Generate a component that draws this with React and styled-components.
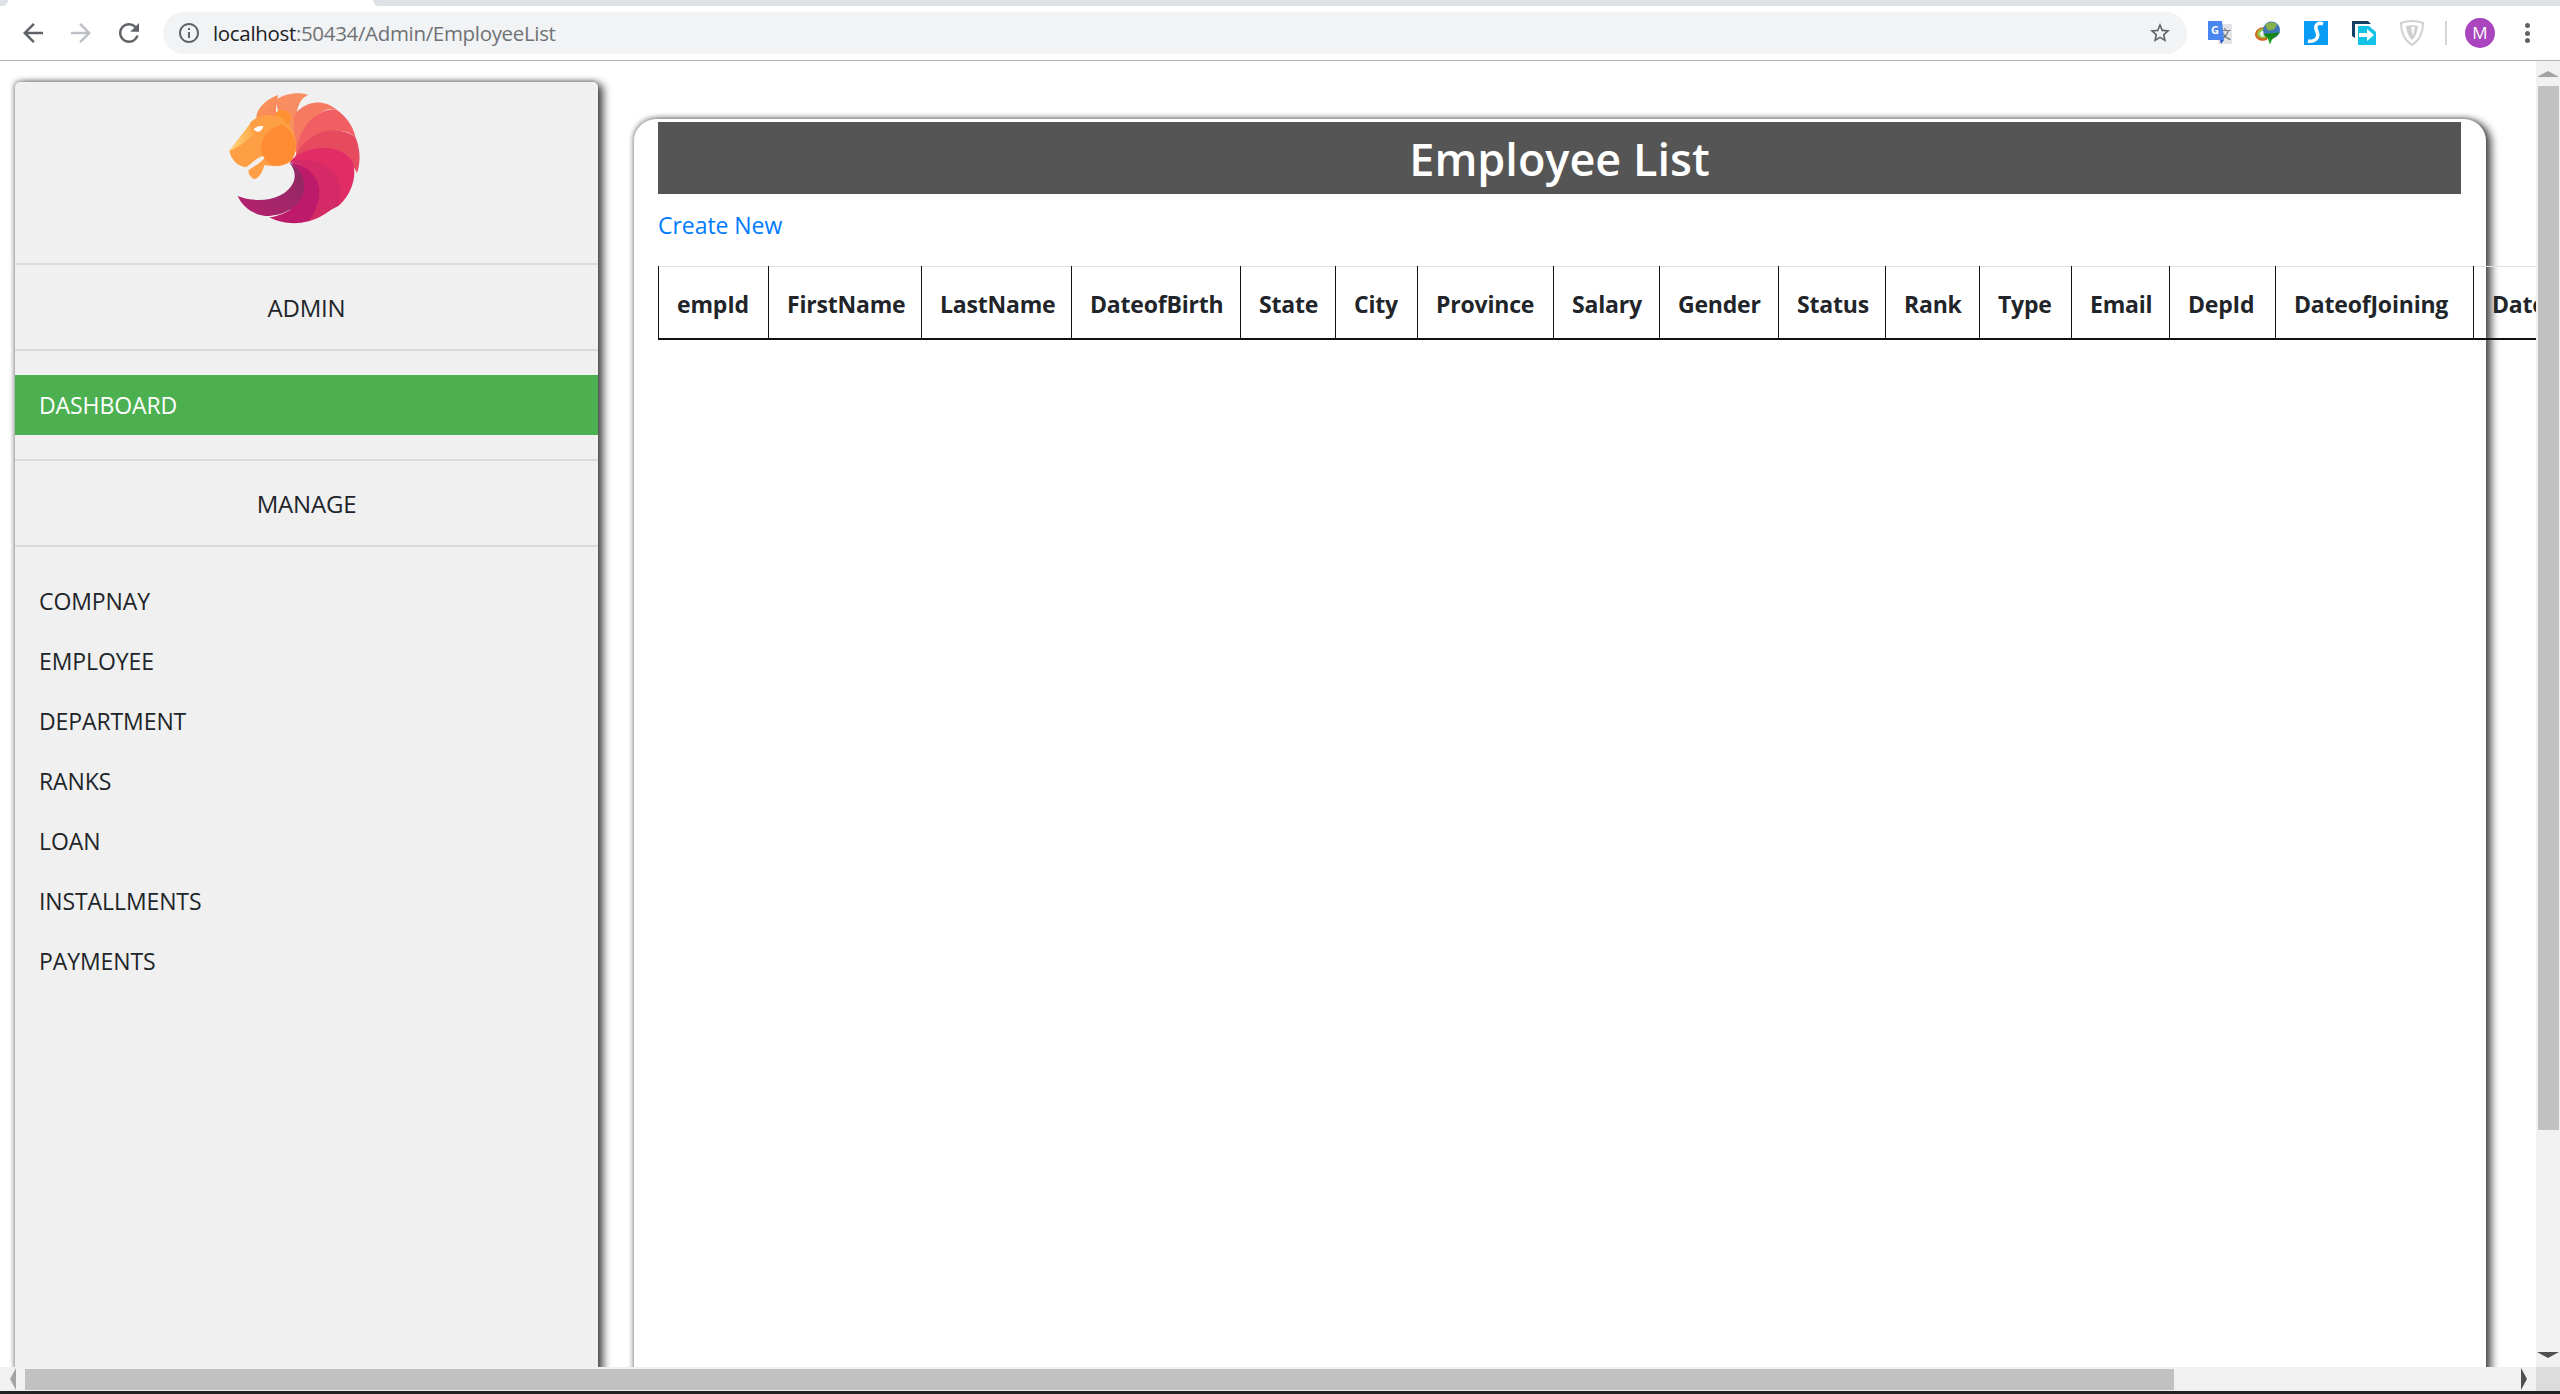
import React from "react";
import styled, { createGlobalStyle } from "styled-components";

const GlobalStyle = createGlobalStyle`
  html, body {
    margin: 0;
    padding: 0;
    width: 2560px;
    height: 1394px;
    overflow: hidden;
    background: #fff;
    font-family: "Open Sans", "Liberation Sans", sans-serif;
    color: #212529;
  }
  * { box-sizing: border-box; }
`;

const Page = styled.div`
  width: 2560px;
  height: 1394px;
  display: flex;
  flex-direction: column;
  overflow: hidden;
`;

/* browser chrome */
const TabStrip = styled.div`
  height: 6px;
  display: flex;
  background: #fff;
`;

const TabCorner = styled.div`
  width: 8px;
  background: #dee1e6;
  border-bottom-right-radius: 6px;
`;

const ActiveTab = styled.div`
  width: 365px;
`;

const TabRest = styled.div`
  flex: 1;
  background: #dee1e6;
  border-bottom-left-radius: 6px;
`;

const Toolbar = styled.div`
  height: 56px;
  display: flex;
  align-items: center;
  padding-left: 9px;
  background: #fff;
  border-bottom: 1px solid #b5b5b5;
`;

const ToolButton = styled.div`
  width: 48px;
  height: 48px;
  display: flex;
  align-items: center;
  justify-content: center;
  flex-shrink: 0;
`;

const AddressBar = styled.div`
  width: 2024px;
  height: 42px;
  margin-left: 10px;
  margin-right: 9px;
  padding: 0 15px 0 14px;
  display: flex;
  align-items: center;
  background: #f1f3f4;
  border-radius: 21px;
`;

const Url = styled.div`
  margin-left: 12px;
  flex: 1;
  font-size: 20.5px;
  letter-spacing: -0.33px;
  color: #6f7276;
`;

const UrlHost = styled.span`
  color: #202124;
`;

const ToolDivider = styled.div`
  width: 2px;
  height: 24px;
  margin-left: 9px;
  background: #d3d4d6;
`;

const Avatar = styled.div`
  width: 30px;
  height: 30px;
  margin-left: 18px;
  border-radius: 50%;
  background: #a845bf;
  color: #fff;
  font-size: 17px;
  line-height: 30px;
  text-align: center;
`;

const MenuDots = styled.div`
  width: 5px;
  height: 20px;
  margin-left: 30px;
  display: flex;
  flex-direction: column;
  justify-content: space-between;
`;

const MenuDot = styled.span`
  width: 5px;
  height: 5px;
  border-radius: 50%;
  background: #5f6368;
`;

/* page area + scrollbars */
const Viewport = styled.div`
  height: 1306px;
  display: flex;
`;

const Main = styled.main`
  width: 2536px;
  height: 100%;
  display: flex;
  align-items: flex-start;
  overflow: hidden;
`;

const Sidebar = styled.aside`
  width: 583px;
  height: 1400px;
  flex-shrink: 0;
  margin: 21px 0 0 15px;
  background: #f0f0f0;
  border-radius: 5px 5px 0 0;
  box-shadow: 5px 2px 8px #444, -1px -1px 5px #999;
`;

const LogoBox = styled.div`
  height: 183px;
  display: flex;
  justify-content: center;
  border-bottom: 2px solid #dcdcdc;
`;

const SectionTitle = styled.div`
  height: 86px;
  padding-top: 1px;
  display: flex;
  align-items: center;
  justify-content: center;
  font-size: 24px;
  letter-spacing: -0.2px;
  font-weight: 400;
  color: #212529;
  border-bottom: 2px solid #dcdcdc;
`;

const NavList = styled.nav`
  padding: ${(props) => props.padding};
  border-bottom: ${(props) => (props.divided ? "2px solid #dcdcdc" : "none")};
`;

const NavItem = styled.a`
  height: 60px;
  display: flex;
  align-items: center;
  padding-left: 24px;
  font-size: 23px;
  letter-spacing: -0.1px;
  font-weight: 400;
  color: ${(props) => (props.active ? "#fff" : "#212529")};
  background: ${(props) => (props.active ? "#4caf50" : "transparent")};
`;

const Card = styled.section`
  width: 1852px;
  height: 1400px;
  flex-shrink: 0;
  margin: 58px 0 0 36px;
  padding: 3px 25px 0 24px;
  background: #fff;
  border-radius: 22px 22px 0 0;
  box-shadow: 5px 2px 8px #444, -1px -1px 5px #999;
`;

const Heading = styled.h1`
  margin: 0;
  height: 72px;
  padding-top: 1px;
  display: flex;
  align-items: center;
  justify-content: center;
  background: #555;
  color: #fff;
  font-size: 45px;
  font-weight: 600;
`;

const CreateLink = styled.a`
  display: block;
  margin: 13px 0 23px;
  line-height: 36px;
  font-size: 23px;
  letter-spacing: -0.05px;
  color: #007bff;
`;

const Table = styled.table`
  width: 2015px;
  table-layout: fixed;
  border-collapse: collapse;
  border-top: 1px solid #dee2e6;
  border-bottom: 2px solid #111;
`;

const HeadCell = styled.th`
  width: ${(props) => props.width}px;
  height: 72px;
  padding: 2px 0 0 18px;
  text-align: left;
  white-space: nowrap;
  overflow: hidden;
  border-left: 1px solid #111;
  font-size: 23px;
  letter-spacing: -0.2px;
  font-weight: 700;
  color: #212529;
`;

const VerticalBar = styled.div`
  width: 24px;
  height: 100%;
  display: flex;
  flex-direction: column;
  background: #f1f1f1;
`;

const BarButton = styled.div`
  width: ${(props) => (props.horizontal ? "25px" : "100%")};
  height: ${(props) => (props.horizontal ? "100%" : "25px")};
  display: flex;
  align-items: center;
  justify-content: center;
  flex-shrink: 0;
`;

const VerticalThumb = styled.div`
  height: 1044px;
  margin: 0 1px 0 2px;
  background: #c1c1c1;
`;

const BarSpacer = styled.div`
  flex: 1;
`;

const HorizontalBar = styled.div`
  height: 24px;
  display: flex;
  background: #f1f1f1;
`;

const HorizontalThumb = styled.div`
  width: 2149px;
  height: 21px;
  margin-top: 2px;
  background: #c1c1c1;
`;

const BarCorner = styled.div`
  width: 24px;
  background: #dcdcdc;
`;

const BottomEdge = styled.div`
  height: 3px;
  background: #222;
`;

const Arrow = styled.span`
  width: 0;
  height: 0;
  border-style: solid;
  border-color: transparent;
  ${(props) =>
    props.dir === "up" &&
    `border-width: 0 11px 6px; border-bottom-color: ${props.color};`}
  ${(props) =>
    props.dir === "down" &&
    `border-width: 6px 11px 0; border-top-color: ${props.color};`}
  ${(props) =>
    props.dir === "left" &&
    `border-width: 11px 6px 11px 0; border-right-color: ${props.color};`}
  ${(props) =>
    props.dir === "right" &&
    `border-width: 11px 0 11px 6px; border-left-color: ${props.color};`}
`;

const Icon = ({ d, color = "#5f6368", size = 30 }) => (
  <svg width={size} height={size} viewBox="0 0 24 24" fill={color}>
    <path d={d} />
  </svg>
);

const TranslateIcon = () => (
  <svg width="26" height="26" viewBox="0 0 26 26">
    <rect x="11" y="4" width="14" height="20" fill="#e4e4e4" />
    <text x="18" y="19" fontSize="12" fill="#5f6368" textAnchor="middle" fontFamily="Noto Sans CJK SC, sans-serif">文</text>
    <path d="M1 1h14l2 19H1z" fill="#4a86f0" />
    <path d="M13 20h4l-3 4z" fill="#2a56c6" />
    <text x="8" y="14" fontSize="11" fontWeight="700" fill="#fff" textAnchor="middle" fontFamily="Open Sans, sans-serif">G</text>
  </svg>
);

const IdmIcon = () => (
  <svg width="26" height="26" viewBox="0 0 26 26">
    <path d="M0 15a8 8 0 0 1 13-6l-1 11C7 22 1 20 0 15z" fill="#d9601c" />
    <path d="M2 15a6 6 0 0 1 10-5l-1 8c-4 1-8 0-9-3z" fill="#8dc63f" />
    <path d="M5 15a3 3 0 0 1 6-2l-1 3c-2 1-4 1-5-1z" fill="#eee" />
    <circle cx="16.500" cy="10" r="8.500" fill="#3f77b8" />
    <path d="M10 5c3-3 9-4 12-.500l-3 5-6 1z" fill="#86b04a" />
    <path d="M8 14l17-1.500-8 7-2 5-2-5.500z" fill="#1f9d1f" />
    <path d="M8 14l17-1.500-8 7z" fill="#0c6e0c" opacity="0.500" />
  </svg>
);

const StackIcon = () => (
  <svg width="26" height="26" viewBox="0 0 26 26">
    <rect x="1" y="1" width="24" height="24" fill="#0a9cf5" />
    <path d="M20 4c-5-2-8 1-7 5 1 3 3 5 1 9-1 2-5 4-9 3" stroke="#fff" strokeWidth="3.500" fill="none" />
  </svg>
);

const ForwardIcon = () => (
  <svg width="26" height="26" viewBox="0 0 26 26">
    <path d="M1 1h16l3 3H4v14l-3-2z" fill="#123f63" />
    <path d="M7 6h11l7 6v13H7z" fill="#14c2e6" />
    <path d="M8 13h8V9l7 6-7 6v-4H8z" fill="#fff" />
  </svg>
);

const ShieldIcon = () => (
  <svg width="24" height="26" viewBox="0 0 24 26">
    <path d="M1 3c7-2.500 15-2.500 22 0 0 9-3 17-11 22C4 20 1 12 1 3z" fill="#fff" stroke="#cfcfcf" strokeWidth="2" />
    <path d="M6 6c4-1 8-1 12 0-.500 6-2.500 11-6 14-3.500-3-5.500-8-6-14z" fill="#cfcfcf" />
    <path d="M11 7h4l-2 9z" fill="#fff" />
  </svg>
);

const LionLogo = () => (
  <svg width="200" height="160" viewBox="18 6 600 480">
    <defs>
      <linearGradient id="tail" x1="0" y1="1" x2="1" y2="0">
        <stop offset="0" stopColor="#b8206f" />
        <stop offset="1" stopColor="#8a2a62" />
      </linearGradient>
      <linearGradient id="mane" x1="0" y1="0" x2="1" y2="1">
        <stop offset="0" stopColor="#ff9c53" />
        <stop offset="1" stopColor="#f57f63" />
      </linearGradient>
      <linearGradient id="muzzle" x1="0" y1="0" x2="1" y2="0">
        <stop offset="0" stopColor="#ffd878" />
        <stop offset="1" stopColor="#ffa347" />
      </linearGradient>
    </defs>
    <path d="M300 262L460 280L412 378L322 424L262 415Z" fill="#cf2669" />
    <path d="M165 112C170 80 200 55 232 45C222 70 222 100 235 130Z" fill="url(#mane)" />
    <path d="M222 62C250 40 295 35 322 45C285 60 280 110 285 215L240 120Z" fill="#f88e62" />
    <path d="M278 110C300 70 360 50 405 88C365 80 320 110 285 220Z" fill="#f67a62" />
    <path d="M285 225C290 150 340 85 405 88C435 110 455 135 463 170C420 135 350 150 285 225Z" fill="#f25f62" />
    <path d="M280 235C310 165 390 125 463 170C478 205 480 245 468 280C450 225 350 185 280 235Z" fill="#e64a5f" />
    <path d="M265 245C320 190 420 190 455 245C470 290 450 345 412 378C425 320 380 225 265 245Z" fill="#e22c66" />
    <path d="M265 245C340 225 420 265 416 330C430 360 380 410 322 424C355 385 365 330 340 295C320 265 295 250 265 245Z" fill="#d42a66" />
    <path d="M265 245C320 255 355 290 355 335C355 375 335 405 322 424C280 436 235 428 205 412C255 405 305 375 310 320C312 290 290 262 265 245Z" fill="#bd1a6b" />
    <path d="M110 348C170 372 255 360 278 305C285 285 280 265 265 248C295 260 312 295 310 325C305 375 255 405 205 408C160 408 125 382 110 348Z" fill="url(#tail)" />
    <path d="M85 213L145 135C150 115 190 100 222 107C225 88 255 82 268 105C272 125 262 130 268 140C290 170 290 220 270 243C250 262 215 260 190 255C185 280 170 297 160 297C150 295 140 280 143 270C165 255 185 245 192 230C175 225 160 245 135 262C105 258 90 235 85 213Z" fill="#ff9f45" />
    <path d="M85 213L145 135C150 150 155 155 165 160C140 180 110 205 85 213Z" fill="url(#muzzle)" />
    <path d="M180 205C182 165 215 135 245 135C275 150 290 185 283 215C275 245 245 260 215 255C195 245 180 225 180 205Z" fill="#ff8c32" />
    <path d="M222 107C225 88 255 82 268 105C272 125 262 130 258 135C250 115 235 105 222 107Z" fill="#ff9130" />
    <path d="M158 148C165 140 178 136 187 139C185 148 178 156 170 155C165 155 160 152 158 148Z" fill="#fff" />
  </svg>
);

const columns = [
  ["empId", 110],
  ["FirstName", 153],
  ["LastName", 150],
  ["DateofBirth", 169],
  ["State", 95],
  ["City", 82],
  ["Province", 136],
  ["Salary", 106],
  ["Gender", 119],
  ["Status", 107],
  ["Rank", 94],
  ["Type", 92],
  ["Email", 98],
  ["DepId", 106],
  ["DateofJoining", 198],
  ["DateofLeaving", 200],
];

const manageItems = [
  "COMPNAY",
  "EMPLOYEE",
  "DEPARTMENT",
  "RANKS",
  "LOAN",
  "INSTALLMENTS",
  "PAYMENTS",
];

const App = () => {
  return (
    <Page>
      <GlobalStyle />
      <TabStrip>
        <TabCorner />
        <ActiveTab />
        <TabRest />
      </TabStrip>
      <Toolbar>
        <ToolButton>
          <Icon d="M20 11H7.830l5.590-5.590L12 4l-8 8 8 8 1.410-1.410L7.830 13H20v-2z" />
        </ToolButton>
        <ToolButton>
          <Icon color="#bdc1c6" d="M4 11h12.170l-5.590-5.590L12 4l8 8-8 8-1.410-1.410L16.170 13H4v-2z" />
        </ToolButton>
        <ToolButton>
          <Icon d="M17.650 6.350A7.958 7.958 0 0 0 12 4c-4.420 0-7.990 3.580-7.990 8s3.570 8 7.990 8c3.730 0 6.840-2.550 7.730-6h-2.080A5.990 5.990 0 0 1 12 18c-3.310 0-6-2.690-6-6s2.690-6 6-6c1.660 0 3.140.690 4.220 1.780L13 11h7V4l-2.350 2.350z" />
        </ToolButton>
        <AddressBar>
          <Icon size={24} d="M11 7h2v2h-2zm0 4h2v6h-2zm1-9C6.480 2 2 6.480 2 12s4.480 10 10 10 10-4.480 10-10S17.520 2 12 2zm0 18c-4.410 0-8-3.590-8-8s3.590-8 8-8 8 3.590 8 8-3.590 8-8 8z" />
          <Url>
            <UrlHost>localhost</UrlHost>:50434/Admin/EmployeeList
          </Url>
          <Icon size={24} d="M22 9.240l-7.190-.620L12 2 9.190 8.630 2 9.240l5.460 4.730L5.820 21 12 17.270 18.180 21l-1.630-7.030L22 9.240zM12 15.400l-3.760 2.270 1-4.280-3.320-2.880 4.380-.380L12 6.100l1.710 4.040 4.380.380-3.320 2.880 1 4.280L12 15.400z" />
        </AddressBar>
        <ToolButton><TranslateIcon /></ToolButton>
        <ToolButton><IdmIcon /></ToolButton>
        <ToolButton><StackIcon /></ToolButton>
        <ToolButton><ForwardIcon /></ToolButton>
        <ToolButton><ShieldIcon /></ToolButton>
        <ToolDivider />
        <Avatar>M</Avatar>
        <MenuDots>
          <MenuDot />
          <MenuDot />
          <MenuDot />
        </MenuDots>
      </Toolbar>
      <Viewport>
        <Main>
          <Sidebar>
            <LogoBox>
              <LionLogo />
            </LogoBox>
            <SectionTitle>ADMIN</SectionTitle>
            <NavList padding="24px 0" divided>
              <NavItem active>DASHBOARD</NavItem>
            </NavList>
            <SectionTitle>MANAGE</SectionTitle>
            <NavList padding="24px 0 0">
              {manageItems.map((item) => (
                <NavItem key={item}>{item}</NavItem>
              ))}
            </NavList>
          </Sidebar>
          <Card>
            <Heading>Employee List</Heading>
            <CreateLink>Create New</CreateLink>
            <Table>
              <thead>
                <tr>
                  {columns.map(([name, width]) => (
                    <HeadCell key={name} width={width}>{name}</HeadCell>
                  ))}
                </tr>
              </thead>
            </Table>
          </Card>
        </Main>
        <VerticalBar>
          <BarButton><Arrow dir="up" color="#a3a3a3" /></BarButton>
          <VerticalThumb />
          <BarSpacer />
          <BarButton><Arrow dir="down" color="#505050" /></BarButton>
        </VerticalBar>
      </Viewport>
      <HorizontalBar>
        <BarButton horizontal><Arrow dir="left" color="#a3a3a3" /></BarButton>
        <HorizontalThumb />
        <BarSpacer />
        <BarButton horizontal><Arrow dir="right" color="#505050" /></BarButton>
        <BarCorner />
      </HorizontalBar>
      <BottomEdge />
    </Page>
  );
};

export default App;
